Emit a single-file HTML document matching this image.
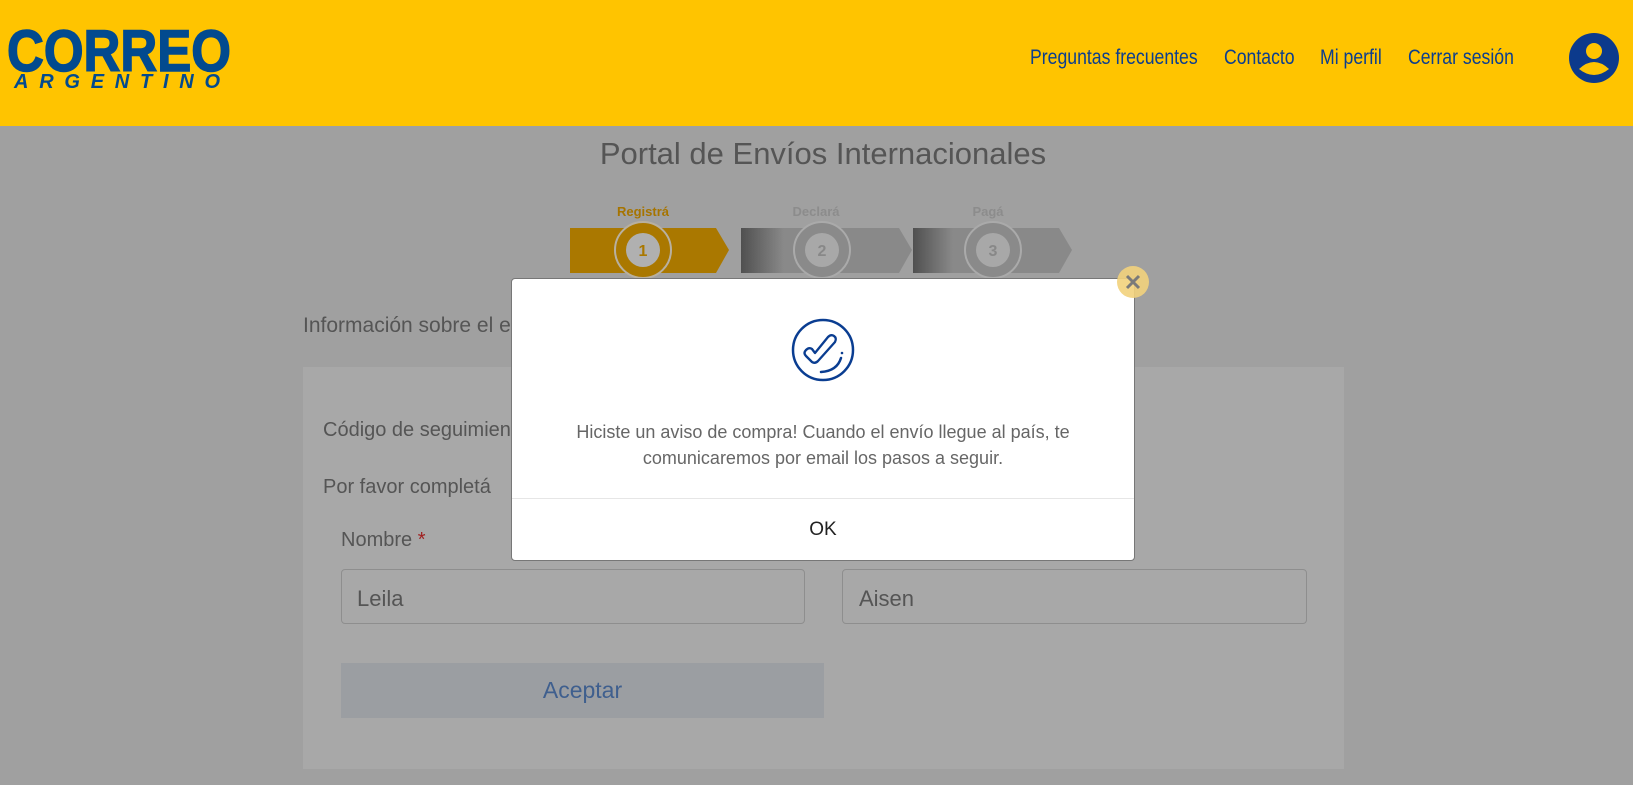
<!DOCTYPE html>
<html><head><meta charset="utf-8"><style>
*{margin:0;padding:0;box-sizing:border-box}
body{width:1633px;height:785px;overflow:hidden;background:#a0a0a0;font-family:"Liberation Sans",sans-serif;position:relative}
.abs{position:absolute}
header{position:absolute;left:0;top:0;width:1633px;height:126px;background:#ffc400;z-index:5}
.nav{position:absolute;top:46px;font-size:21px;color:#0c3e8e;white-space:nowrap;transform:scaleX(0.84);transform-origin:0 0}
.t{color:#555;white-space:nowrap}
</style></head><body>
<header>
<svg class="abs" style="left:0;top:0" width="260" height="100">
<text x="7" y="71" textLength="224" lengthAdjust="spacingAndGlyphs" font-family="Liberation Sans" font-weight="bold" font-size="58" fill="#024a8f" stroke="#024a8f" stroke-width="1.5">CORREO</text>
<text x="14" y="88" textLength="206" lengthAdjust="spacing" font-family="Liberation Sans" font-weight="bold" font-style="italic" font-size="20" fill="#024a8f">ARGENTINO</text>
</svg>
<div class="nav" style="left:1030px">Preguntas frecuentes</div>
<div class="nav" style="left:1224px">Contacto</div>
<div class="nav" style="left:1320px">Mi perfil</div>
<div class="nav" style="left:1408px">Cerrar sesión</div>
<svg class="abs" style="left:1568px;top:32px" width="52" height="52"><circle cx="26" cy="26" r="25" fill="#0c3a8c"/><circle cx="26" cy="19" r="8" fill="#ffc400"/><path d="M11 37 Q26 23 41 37 Q26 49 11 37Z" fill="#ffc400"/></svg>
</header>

<div class="abs t" style="left:0;width:1646px;text-align:center;top:136px;font-size:31px">Portal de Envíos Internacionales</div>

<div class="abs" style="left:570px;top:204px;width:146px;text-align:center;font-size:13px;font-weight:bold;color:#a67400">Registrá</div>
<div class="abs" style="left:741px;top:204px;width:150px;text-align:center;font-size:13px;font-weight:bold;color:#8c8c8c">Declará</div>
<div class="abs" style="left:913px;top:204px;width:150px;text-align:center;font-size:13px;font-weight:bold;color:#8c8c8c">Pagá</div>
<svg class="abs" style="left:560px;top:220px" width="530" height="62">
<defs><linearGradient id="g" x1="0" x2="1"><stop offset="0" stop-color="#505050"/><stop offset="0.25" stop-color="#898989"/><stop offset="1" stop-color="#898989"/></linearGradient></defs>
<polygon points="10,8 156,8 169,30 156,53 10,53" fill="#aa7800"/>
<polygon points="181,8 339,8 352,30 339,53 181,53" fill="url(#g)"/>
<polygon points="353,8 499,8 512,30 499,53 353,53" fill="url(#g)"/>
<circle cx="83" cy="30" r="28" fill="#aa7800" stroke="#b8b0a0" stroke-width="2"/><circle cx="83" cy="30" r="17" fill="#b0b0b0"/>
<text x="83" y="36" text-anchor="middle" font-size="16" font-weight="bold" fill="#aa7800" font-family="Liberation Sans">1</text>
<circle cx="262" cy="30" r="28" fill="#8a8a8a" stroke="#aaa" stroke-width="2"/><circle cx="262" cy="30" r="17" fill="#a8a8a8"/>
<text x="262" y="36" text-anchor="middle" font-size="16" font-weight="bold" fill="#888" font-family="Liberation Sans">2</text>
<circle cx="433" cy="30" r="28" fill="#8a8a8a" stroke="#aaa" stroke-width="2"/><circle cx="433" cy="30" r="17" fill="#a8a8a8"/>
<text x="433" y="36" text-anchor="middle" font-size="16" font-weight="bold" fill="#888" font-family="Liberation Sans">3</text>
</svg>

<div class="abs t" style="left:303px;top:314px;font-size:21px">Información sobre el envío</div>
<div class="abs" style="left:303px;top:367px;width:1041px;height:402px;background:#a8a8a8"></div>
<div class="abs t" style="left:323px;top:419px;font-size:20px">Código de seguimiento</div>
<div class="abs t" style="left:323px;top:476px;font-size:20px">Por favor completá</div>
<div class="abs t" style="left:341px;top:529px;font-size:20px">Nombre <span style="color:#a02020">*</span></div>
<div class="abs" style="left:341px;top:569px;width:464px;height:55px;border:1px solid #8e8e8e;border-radius:4px"></div>
<div class="abs t" style="left:357px;top:586px;font-size:22px">Leila</div>
<div class="abs" style="left:842px;top:569px;width:465px;height:55px;border:1px solid #8e8e8e;border-radius:4px"></div>
<div class="abs t" style="left:859px;top:586px;font-size:22px">Aisen</div>
<div class="abs" style="left:341px;top:663px;width:483px;height:55px;background:#9b9ea2;color:#3f5f8e;font-size:23px;text-align:center;line-height:55px">Aceptar</div>

<div class="abs" style="left:511px;top:278px;width:624px;height:283px;background:#fff;border-radius:4px;border:1px solid #777"></div>
<div class="abs" style="left:512px;top:498px;width:622px;height:1px;background:#e6e6e6"></div>
<svg class="abs" style="left:791px;top:318px" width="64" height="64"><circle cx="32" cy="32" r="30" fill="none" stroke="#0a3d91" stroke-width="2.5"/><path d="M15 32 Q12 35 15 38 L21 44 Q24 46 27 43 L44 24 Q46 20 43 18 Q40 16 37 19 L24 35 L21 31 Q18 29 15 32Z" fill="none" stroke="#0a3d91" stroke-width="2.3" stroke-linejoin="round"/><path d="M30 54 Q46 53 50 40" fill="none" stroke="#0a3d91" stroke-width="2.5" stroke-linecap="round"/><circle cx="51" cy="35" r="1.3" fill="#0a3d91"/></svg>
<div class="abs" style="left:511px;width:624px;top:419px;text-align:center;font-size:18px;line-height:26px;color:#666">Hiciste un aviso de compra! Cuando el envío llegue al país, te<br>comunicaremos por email los pasos a seguir.</div>
<div class="abs" style="left:511px;width:624px;top:519px;text-align:center;font-size:19px;color:#222">OK</div>
<svg class="abs" style="left:1116px;top:265px" width="34" height="34"><circle cx="17" cy="17" r="16" fill="#f2d27c" opacity="0.9"/><path d="M11 11 L23 23 M23 11 L11 23" stroke="#7a7a7a" stroke-width="3"/></svg>
</body></html>
